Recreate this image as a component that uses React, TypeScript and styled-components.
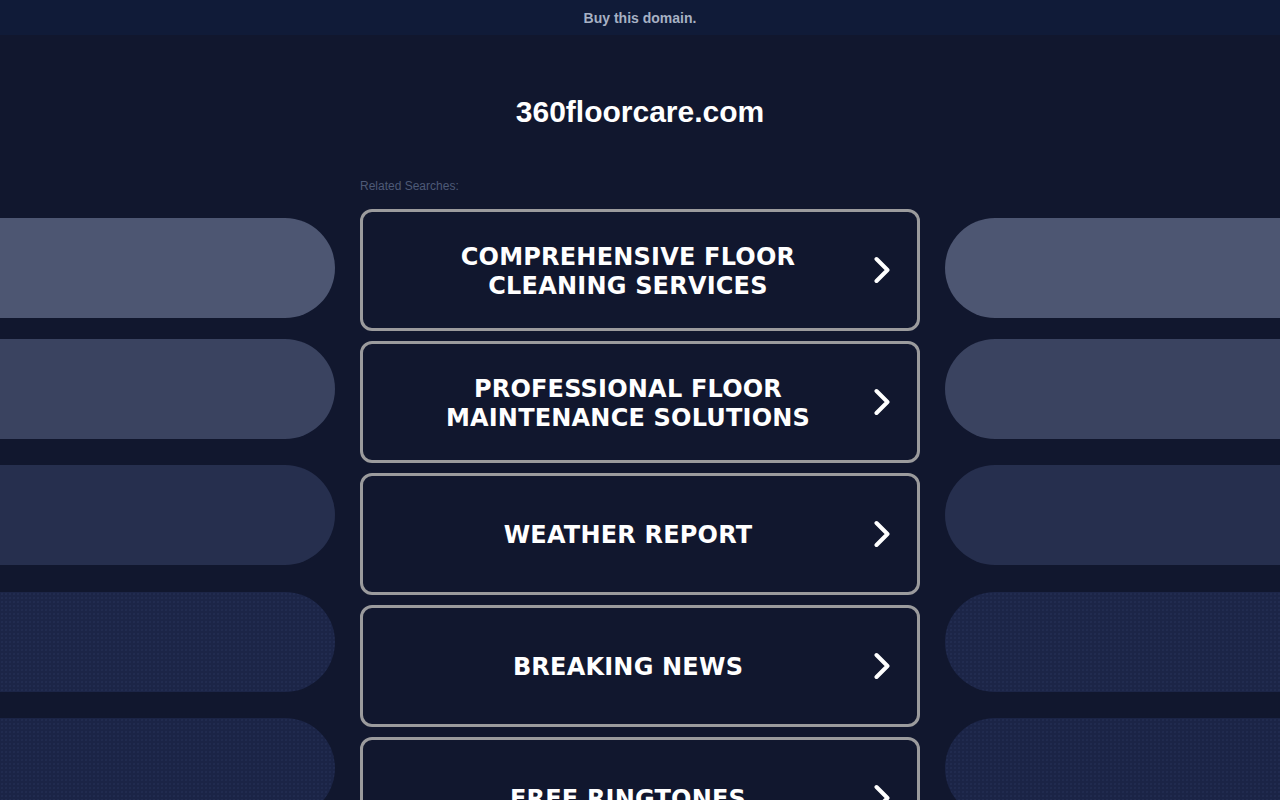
import React from "react";
import styled, { createGlobalStyle } from "styled-components";

const Global = createGlobalStyle`
  html, body { margin: 0; padding: 0; background: #11172e; overflow: hidden; }
  body { font-family: "Liberation Sans", Arial, sans-serif; }
  * { box-sizing: border-box; }
`;

const TopBar = styled.div`
  height: 35px;
  background: #101b38;
  display: flex;
  align-items: center;
  justify-content: center;
  color: #a7b1c4;
  font-size: 14px;
  font-weight: bold;
`;

const Title = styled.h1`
  margin: 60px 0 0;
  height: 34px;
  line-height: 34px;
  text-align: center;
  color: #ffffff;
  font-size: 30px;
  font-weight: bold;
`;

const Main = styled.div`
  margin-top: 41px;
  display: grid;
  grid-template-columns: 1fr 560px 1fr;
  column-gap: 25px;
  align-items: start;
`;

const Side = styled.div`
  padding-top: 48px;
  display: flex;
  flex-direction: column;
`;

const Pill = styled.div<{ $side: "left" | "right"; $bg: string; $mt: number; $dots?: boolean }>`
  height: 100px;
  margin-top: ${(p) => p.$mt}px;
  background-color: ${(p) => p.$bg};
  ${(p) =>
    p.$dots
      ? `background-image: radial-gradient(rgba(55,70,115,0.3) 0.6px, transparent 0.9px); background-size: 4px 4px;`
      : ""}
  border-radius: ${(p) => (p.$side === "left" ? "0 50px 50px 0" : "50px 0 0 50px")};
`;

const Center = styled.div`
  padding-top: 9px;
  display: flex;
  flex-direction: column;
`;

const Label = styled.div`
  height: 15px;
  line-height: 15px;
  font-size: 12px;
  color: #4e5a77;
  margin-bottom: 15px;
`;

const LinkButton = styled.a`
  height: 122px;
  margin-bottom: 10px;
  border: 3px solid #9b9b9d;
  border-radius: 12px;
  background: #11172e;
  display: flex;
  align-items: center;
  padding: 0 27px 0 60px;
  text-decoration: none;
  cursor: pointer;
`;

const LinkText = styled.span`
  flex: 1;
  margin-right: 41px;
  padding-top: 3px;
  text-align: center;
  color: #ffffff;
  font-family: "DejaVu Sans", Verdana, sans-serif;
  font-weight: bold;
  font-size: 24px;
  line-height: 29px;
  letter-spacing: 0.2px;
`;

const Chevron = () => (
  <svg width="16" height="28" viewBox="0 0 16 28" style={{ flex: "none" }}>
    <polyline
      points="2.5,3 13.5,14 2.5,25"
      fill="none"
      stroke="#ffffff"
      strokeWidth="4"
      strokeLinecap="round"
      strokeLinejoin="round"
    />
  </svg>
);

const pills = [
  { bg: "#4d5672", mt: 0 },
  { bg: "#3a4360", mt: 21 },
  { bg: "#262f4e", mt: 26 },
  { bg: "#1c2547", mt: 27, dots: true },
  { bg: "#1b2446", mt: 26, dots: true },
];

const links = [
  "COMPREHENSIVE FLOOR CLEANING SERVICES",
  "PROFESSIONAL FLOOR MAINTENANCE SOLUTIONS",
  "WEATHER REPORT",
  "BREAKING NEWS",
  "FREE RINGTONES",
];

export default function App() {
  return (
    <>
      <Global />
      <TopBar>Buy this domain.</TopBar>
      <Title>360floorcare.com</Title>
      <Main>
        <Side>
          {pills.map((p, i) => (
            <Pill key={i} $side="left" $bg={p.bg} $mt={p.mt} $dots={p.dots} />
          ))}
        </Side>
        <Center>
          <Label>Related Searches:</Label>
          {links.map((l) => (
            <LinkButton key={l}>
              <LinkText>{l}</LinkText>
              <Chevron />
            </LinkButton>
          ))}
        </Center>
        <Side>
          {pills.map((p, i) => (
            <Pill key={i} $side="right" $bg={p.bg} $mt={p.mt} $dots={p.dots} />
          ))}
        </Side>
      </Main>
    </>
  );
}
